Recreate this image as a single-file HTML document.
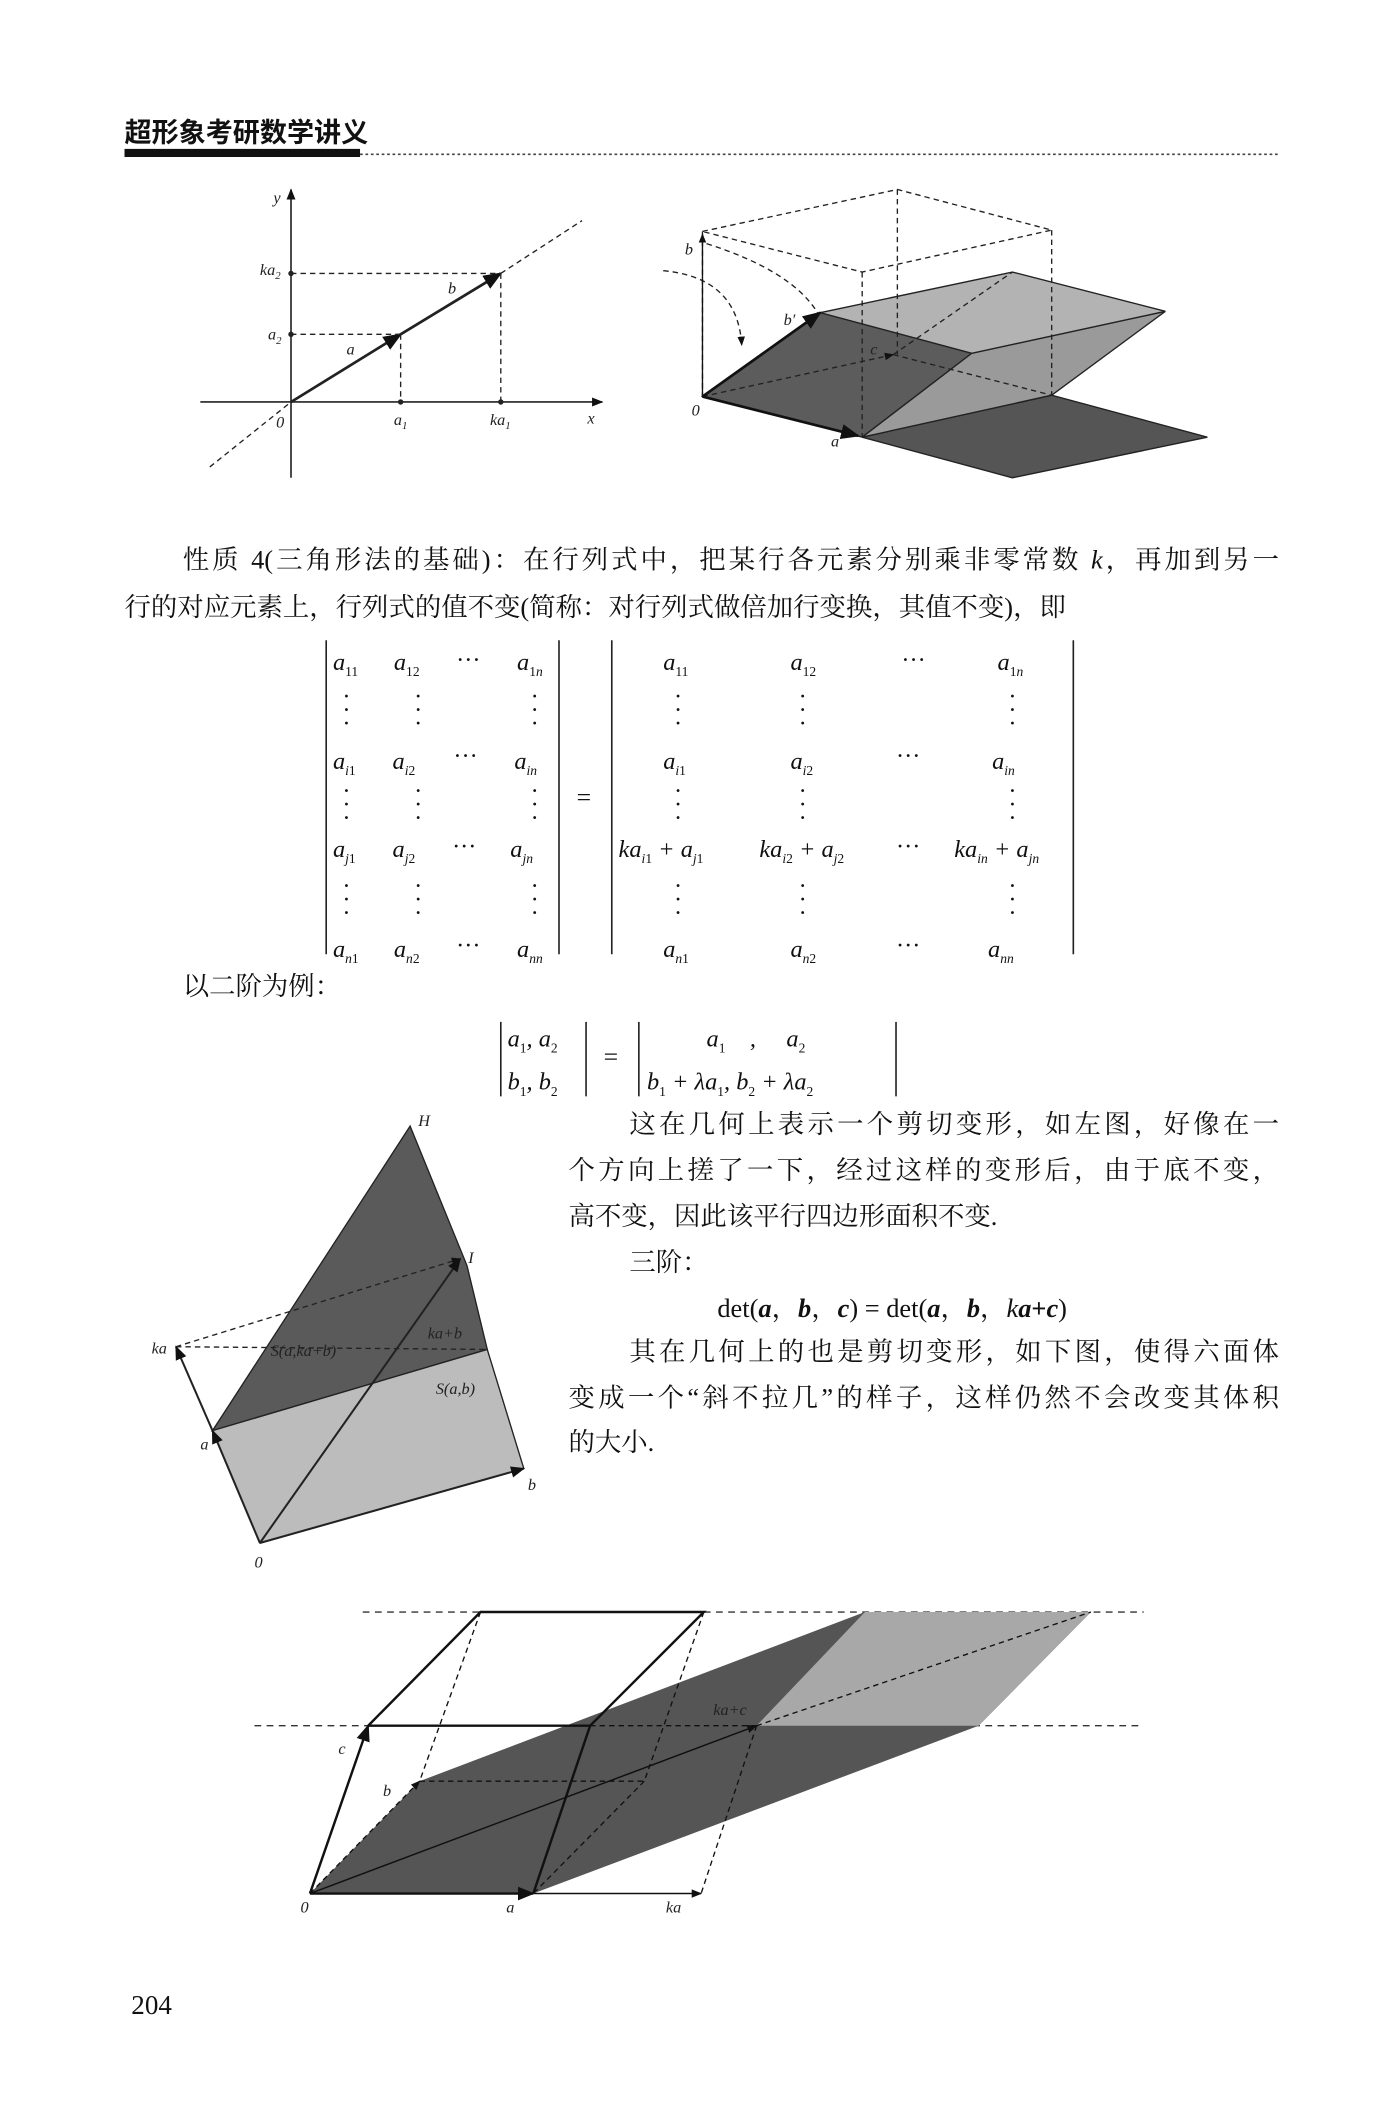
<!DOCTYPE html>
<html><head><meta charset="utf-8">
<style>
html,body{margin:0;padding:0;background:#fff;}
body{width:1386px;height:2125px;overflow:hidden;position:relative;}
#p{position:absolute;left:0;top:0;width:1024px;height:1570px;transform:scale(1.3535);transform-origin:0 0;}
.t{position:absolute;font-family:"Liberation Serif","Noto Serif CJK SC",serif;font-size:19.5px;color:#111;white-space:nowrap;line-height:1;}
.j{text-align:justify;text-align-last:justify;white-space:normal;}
.m{position:absolute;font-family:"Liberation Serif",serif;font-style:italic;font-size:18px;color:#111;white-space:nowrap;line-height:1;}
.m sub{font-size:10px;font-style:normal;}
.m sub i{font-style:italic}
.h{position:absolute;font-family:"Liberation Sans","Noto Sans CJK SC",sans-serif;font-weight:bold;font-size:20px;color:#111;}
svg text{font-family:"Liberation Serif",serif;font-style:italic;font-size:12px;fill:#222;}
</style></head><body><div id="p">
<div class="h" style="left:92px;top:82px;">超形象考研数学讲义</div>
<svg width="1024" height="1570" style="position:absolute;left:0;top:0">
<defs><marker id="ar" viewBox="0 0 10 10" refX="9" refY="5" markerWidth="7" markerHeight="7" orient="auto"><path d="M0,1 L10,5 L0,9 Z" fill="#111"/></marker></defs>
<rect x="92" y="110" width="174" height="6" fill="#111"/>
<line x1="266" y1="114" x2="946" y2="114" stroke="#444" stroke-width="1.2" stroke-dasharray="2,2"/>
<g stroke="#222" fill="none">
<line x1="215" y1="353" x2="215" y2="140" marker-end="url(#ar)" stroke-width="1.2"/>
<line x1="148" y1="297" x2="445" y2="297" marker-end="url(#ar)" stroke-width="1.2"/>
<line x1="155" y1="345" x2="215" y2="297" stroke-dasharray="4,3"/>
<line x1="370" y1="202" x2="430" y2="163" stroke-dasharray="4,3"/>
<line x1="215" y1="297" x2="296" y2="247" stroke-width="2" marker-end="url(#ar)"/>
<line x1="296" y1="247" x2="370" y2="202" stroke-width="2" marker-end="url(#ar)"/>
<line x1="215" y1="247" x2="296" y2="247" stroke-dasharray="4,3"/>
<line x1="215" y1="202" x2="370" y2="202" stroke-dasharray="4,3"/>
<line x1="296" y1="247" x2="296" y2="297" stroke-dasharray="4,3"/>
<line x1="370" y1="202" x2="370" y2="297" stroke-dasharray="4,3"/>
</g>
<g fill="#222"><circle cx="215" cy="247" r="2"/><circle cx="215" cy="202" r="2"/><circle cx="296" cy="297" r="2"/><circle cx="370" cy="297" r="2"/></g>
<text x="202" y="150">y</text><text x="192" y="203">ka<tspan font-size="8" dy="3">2</tspan></text>
<text x="198" y="251">a<tspan font-size="8" dy="3">2</tspan></text>
<text x="256" y="262">a</text><text x="331" y="217">b</text>
<text x="204" y="316">0</text><text x="291" y="314">a<tspan font-size="8" dy="3">1</tspan></text>
<text x="362" y="314">ka<tspan font-size="8" dy="3">1</tspan></text><text x="434" y="313">x</text>
<polygon points="637,323 777,292 892,323 748,353" fill="#555" stroke="#222"/>
<polygon points="519,293 606,231 718,261 637,323" fill="#5c5c5c" stroke="#222"/>
<polygon points="718,261 861,230 777,292 637,323" fill="#9a9a9a" stroke="#222"/>
<polygon points="606,231 748,201 861,230 718,261" fill="#b3b3b3" stroke="#222"/>
<g stroke="#222" fill="none" stroke-dasharray="4,3">
<polygon points="519,171 663,140 777,170 637,201"/>
<line x1="519" y1="171" x2="519" y2="293"/><line x1="663" y1="140" x2="663" y2="262"/>
<line x1="777" y1="170" x2="777" y2="292"/><line x1="637" y1="201" x2="637" y2="323"/>
<line x1="519" y1="293" x2="660" y2="262" marker-end="url(#ar)"/>
<line x1="660" y1="262" x2="777" y2="292"/><line x1="660" y1="262" x2="748" y2="201"/>
<path d="M522,180 Q585,200 604,231"/><path d="M490,200 Q545,205 548,255" marker-end="url(#ar)"/>
</g>
<line x1="519" y1="293" x2="606" y2="231" stroke="#111" stroke-width="2" marker-end="url(#ar)"/>
<line x1="519" y1="293" x2="634" y2="322" stroke="#111" stroke-width="2" marker-end="url(#ar)"/>
<line x1="519" y1="293" x2="519" y2="173" stroke="#111" marker-end="url(#ar)"/>
<text x="506" y="188">b</text><text x="579" y="240">b′</text><text x="643" y="262">c</text>
<text x="511" y="307">0</text><text x="614" y="330">a</text>
<polygon points="157,1057 303,832 345,935 360,997" fill="#5a5a5a" stroke="#222"/>
<polygon points="157,1057 360,997 387,1085 192,1140" fill="#bcbcbc" stroke="#222"/>
<g stroke="#222" fill="none">
<line x1="130" y1="995" x2="360" y2="997" stroke-dasharray="4,3"/>
<line x1="130" y1="995" x2="340" y2="930" stroke-dasharray="4,3" marker-end="url(#ar)"/>
<line x1="192" y1="1140" x2="157" y2="1057" stroke-width="1.5" marker-end="url(#ar)"/>
<line x1="157" y1="1057" x2="130" y2="995" stroke-width="1.5" marker-end="url(#ar)"/>
<line x1="192" y1="1140" x2="340" y2="930" stroke-width="1.5" marker-end="url(#ar)"/>
<line x1="192" y1="1140" x2="387" y2="1085" stroke-width="1.5" marker-end="url(#ar)"/>
</g>
<text x="309" y="832">H</text><text x="346" y="933">I</text><text x="112" y="1000">ka</text>
<text x="200" y="1002" font-size="11">S(a,ka+b)</text><text x="316" y="989" font-size="11">ka+b</text>
<text x="322" y="1030" font-size="11">S(a,b)</text><text x="148" y="1071">a</text>
<text x="390" y="1101">b</text><text x="188" y="1158">0</text>
<g stroke="#333" stroke-dasharray="5,4"><line x1="268" y1="1191" x2="845" y2="1191"/><line x1="188" y1="1275" x2="845" y2="1275"/></g>
<polygon points="229,1399 310,1316 639,1191 806,1191 723,1275 394,1399" fill="#555"/>
<polygon points="639,1191 806,1191 723,1275 559,1275" fill="#a8a8a8"/>
<g stroke="#111" fill="none" stroke-width="1.8">
<line x1="229" y1="1399" x2="272" y2="1275" marker-end="url(#ar)"/>
<polyline points="272,1275 355,1191 520,1191 436,1275 272,1275"/>
<line x1="436" y1="1275" x2="394" y2="1399"/>
<line x1="229" y1="1399" x2="394" y2="1399" marker-end="url(#ar)"/>
</g>
<g stroke="#111" fill="none" stroke-width="1.1">
<line x1="394" y1="1399" x2="518" y2="1399" marker-end="url(#ar)"/>
<line x1="229" y1="1399" x2="559" y2="1275" marker-end="url(#ar)"/>
</g>
<g stroke="#111" fill="none" stroke-dasharray="4,3">
<line x1="229" y1="1399" x2="310" y2="1316" marker-end="url(#ar)"/>
<line x1="355" y1="1191" x2="310" y2="1316"/><line x1="520" y1="1191" x2="476" y2="1316"/>
<line x1="310" y1="1316" x2="476" y2="1316"/><line x1="476" y1="1316" x2="394" y2="1399"/>
<line x1="559" y1="1275" x2="518" y2="1399"/><line x1="559" y1="1275" x2="806" y2="1191"/>
<line x1="436" y1="1275" x2="559" y2="1275"/>
</g>
<text x="250" y="1296">c</text><text x="283" y="1327">b</text><text x="527" y="1267">ka+c</text>
<text x="222" y="1413">0</text><text x="374" y="1413">a</text><text x="492" y="1413">ka</text>
<g stroke="#222" stroke-width="1.2">
<line x1="241" y1="473" x2="241" y2="705"/><line x1="413" y1="473" x2="413" y2="705"/>
<line x1="452" y1="473" x2="452" y2="705"/><line x1="793" y1="473" x2="793" y2="705"/>
<line x1="370" y1="755" x2="370" y2="810"/><line x1="433" y1="755" x2="433" y2="810"/>
<line x1="472" y1="755" x2="472" y2="810"/><line x1="662" y1="755" x2="662" y2="810"/>
</g>
</svg>
<div class="t j" style="left:135px;top:405px;width:810px;">性质 4(三角形法的基础)：在行列式中，把某行各元素分别乘非零常数 <i>k</i>，再加到另一</div>
<div class="t" style="left:92px;top:440px;">行的对应元素上，行列式的值不变(简称：对行列式做倍加行变换，其值不变)，即</div>
<div class="m" style="left:246px;top:480px">a<sub>11</sub></div><div class="m" style="left:291px;top:480px">a<sub>12</sub></div><div class="m" style="left:337px;top:478px;font-style:normal">···</div><div class="m" style="left:382px;top:480px">a<sub>1<i>n</i></sub></div>
<div class="m" style="left:246px;top:553px">a<sub><i>i</i>1</sub></div><div class="m" style="left:290px;top:553px">a<sub><i>i</i>2</sub></div><div class="m" style="left:335px;top:549px;font-style:normal">···</div><div class="m" style="left:380px;top:553px">a<sub><i>in</i></sub></div>
<div class="m" style="left:246px;top:618px">a<sub><i>j</i>1</sub></div><div class="m" style="left:290px;top:618px">a<sub><i>j</i>2</sub></div><div class="m" style="left:334px;top:616px;font-style:normal">···</div><div class="m" style="left:377px;top:618px">a<sub><i>jn</i></sub></div>
<div class="m" style="left:246px;top:692px">a<sub><i>n</i>1</sub></div><div class="m" style="left:291px;top:692px">a<sub><i>n</i>2</sub></div><div class="m" style="left:337px;top:689px;font-style:normal">···</div><div class="m" style="left:382px;top:692px">a<sub><i>nn</i></sub></div>
<div class="m" style="left:490px;top:480px">a<sub>11</sub></div><div class="m" style="left:584px;top:480px">a<sub>12</sub></div><div class="m" style="left:666px;top:478px;font-style:normal">···</div><div class="m" style="left:737px;top:480px">a<sub>1<i>n</i></sub></div>
<div class="m" style="left:490px;top:553px">a<sub><i>i</i>1</sub></div><div class="m" style="left:584px;top:553px">a<sub><i>i</i>2</sub></div><div class="m" style="left:662px;top:549px;font-style:normal">···</div><div class="m" style="left:733px;top:553px">a<sub><i>in</i></sub></div>
<div class="m" style="left:457px;top:618px">ka<sub><i>i</i>1</sub> + a<sub><i>j</i>1</sub></div><div class="m" style="left:561px;top:618px">ka<sub><i>i</i>2</sub> + a<sub><i>j</i>2</sub></div><div class="m" style="left:662px;top:616px;font-style:normal">···</div><div class="m" style="left:705px;top:618px">ka<sub><i>in</i></sub> + a<sub><i>jn</i></sub></div>
<div class="m" style="left:490px;top:692px">a<sub><i>n</i>1</sub></div><div class="m" style="left:584px;top:692px">a<sub><i>n</i>2</sub></div><div class="m" style="left:662px;top:689px;font-style:normal">···</div><div class="m" style="left:730px;top:692px">a<sub><i>nn</i></sub></div>
<div class="m" style="left:253px;top:510px;font-style:normal;line-height:0.55">·<br>·<br>·</div><div class="m" style="left:306px;top:510px;font-style:normal;line-height:0.55">·<br>·<br>·</div><div class="m" style="left:392px;top:510px;font-style:normal;line-height:0.55">·<br>·<br>·</div>
<div class="m" style="left:253px;top:580px;font-style:normal;line-height:0.55">·<br>·<br>·</div><div class="m" style="left:306px;top:580px;font-style:normal;line-height:0.55">·<br>·<br>·</div><div class="m" style="left:392px;top:580px;font-style:normal;line-height:0.55">·<br>·<br>·</div>
<div class="m" style="left:253px;top:650px;font-style:normal;line-height:0.55">·<br>·<br>·</div><div class="m" style="left:306px;top:650px;font-style:normal;line-height:0.55">·<br>·<br>·</div><div class="m" style="left:392px;top:650px;font-style:normal;line-height:0.55">·<br>·<br>·</div>
<div class="m" style="left:498px;top:510px;font-style:normal;line-height:0.55">·<br>·<br>·</div><div class="m" style="left:590px;top:510px;font-style:normal;line-height:0.55">·<br>·<br>·</div><div class="m" style="left:745px;top:510px;font-style:normal;line-height:0.55">·<br>·<br>·</div>
<div class="m" style="left:498px;top:580px;font-style:normal;line-height:0.55">·<br>·<br>·</div><div class="m" style="left:590px;top:580px;font-style:normal;line-height:0.55">·<br>·<br>·</div><div class="m" style="left:745px;top:580px;font-style:normal;line-height:0.55">·<br>·<br>·</div>
<div class="m" style="left:498px;top:650px;font-style:normal;line-height:0.55">·<br>·<br>·</div><div class="m" style="left:590px;top:650px;font-style:normal;line-height:0.55">·<br>·<br>·</div><div class="m" style="left:745px;top:650px;font-style:normal;line-height:0.55">·<br>·<br>·</div>
<div class="m" style="left:426px;top:580px;font-style:normal;font-size:19px">=</div>
<div class="t" style="left:135px;top:720px;">以二阶为例：</div>
<div class="m" style="left:375px;top:758px">a<sub>1</sub>, a<sub>2</sub></div>
<div class="m" style="left:375px;top:790px">b<sub>1</sub>, b<sub>2</sub></div>
<div class="m" style="left:446px;top:772px;font-style:normal;font-size:19px">=</div>
<div class="m" style="left:522px;top:758px">a<sub>1</sub> &nbsp; &nbsp;, &nbsp; &nbsp; a<sub>2</sub></div>
<div class="m" style="left:478px;top:790px">b<sub>1</sub> + λa<sub>1</sub>, b<sub>2</sub> + λa<sub>2</sub></div>
<div class="t j" style="left:465px;top:822px;width:480px;">这在几何上表示一个剪切变形，如左图，好像在一</div>
<div class="t j" style="left:420px;top:856px;width:525px;">个方向上搓了一下，经过这样的变形后，由于底不变，</div>
<div class="t" style="left:420px;top:890px;">高不变，因此该平行四边形面积不变.</div>
<div class="t" style="left:465px;top:924px;">三阶：</div>
<div class="t" style="left:530px;top:958px;">det(<b><i>a</i></b>，<b><i>b</i></b>，<b><i>c</i></b>) = det(<b><i>a</i></b>，<b><i>b</i></b>，<i>k</i><b><i>a</i>+<i>c</i></b>)</div>
<div class="t j" style="left:465px;top:990px;width:480px;">其在几何上的也是剪切变形，如下图，使得六面体</div>
<div class="t j" style="left:420px;top:1024px;width:525px;">变成一个“斜不拉几”的样子，这样仍然不会改变其体积</div>
<div class="t" style="left:420px;top:1057px;">的大小.</div>
<div class="t" style="left:97px;top:1472px;font-size:20px;">204</div>
</div></body></html>
